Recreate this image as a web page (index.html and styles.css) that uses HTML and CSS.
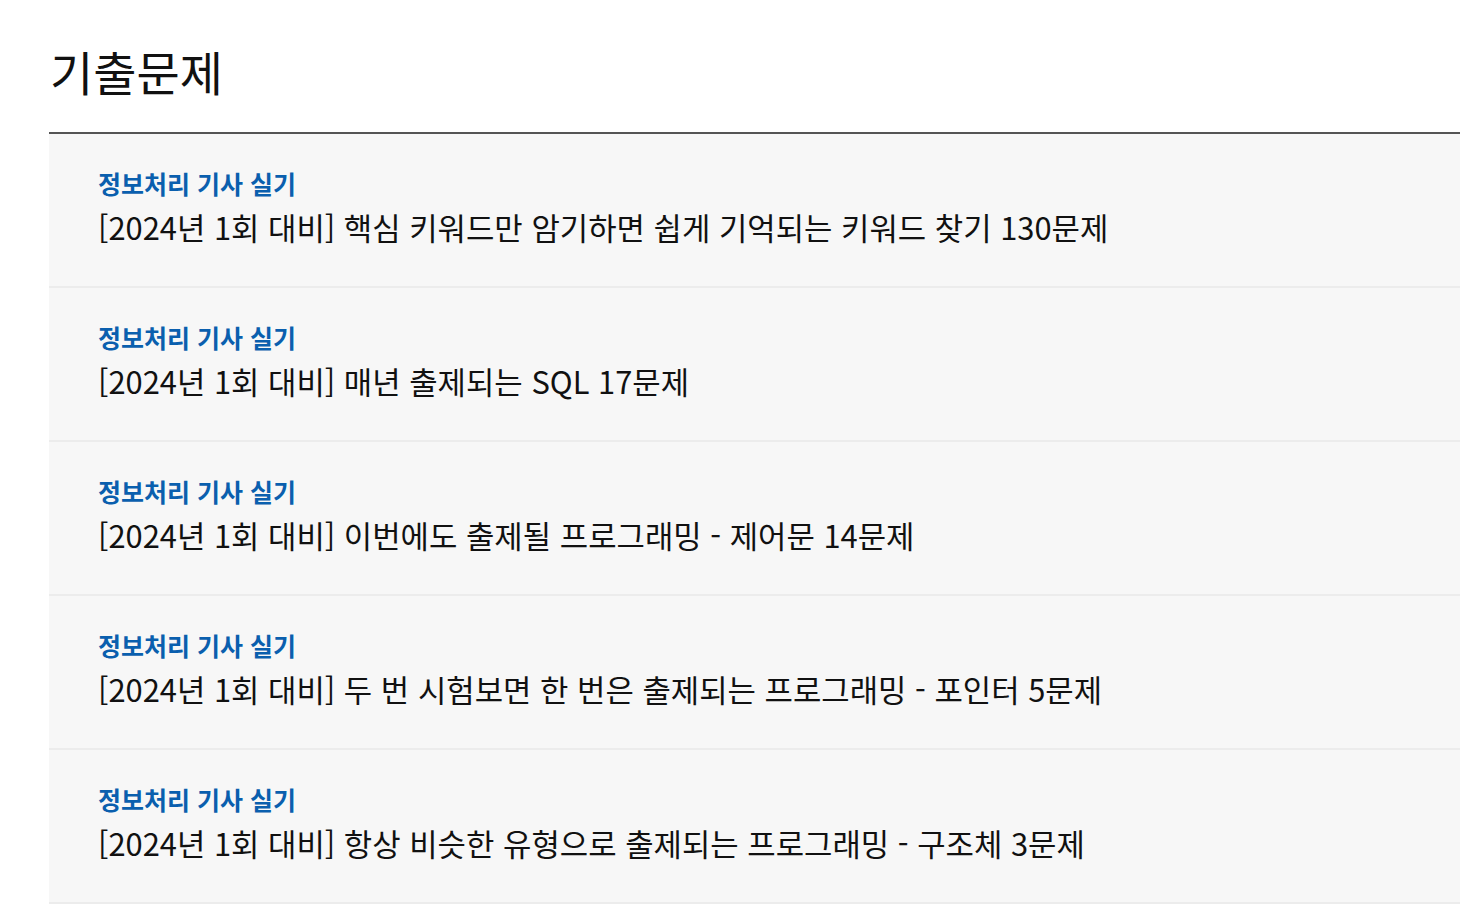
FILE: index.html
```html
<!DOCTYPE html>
<html lang="ko">
  <head>
    <meta charset="utf-8">
    <title>기출문제</title>
    <link rel="stylesheet" href="styles.css">
  </head>
  <body>
    <div class="board">
      <h1 class="board-title">기출문제</h1>

      <ul class="post-list">
        <li class="post">
          <span class="post-cat">정보처리 기사 실기</span>
          <p class="post-name">[2024년 1회 대비] 핵심 키워드만 암기하면 쉽게 기억되는 키워드 찾기 130문제</p>
        </li>
        <li class="post">
          <span class="post-cat">정보처리 기사 실기</span>
          <p class="post-name">[2024년 1회 대비] 매년 출제되는 SQL 17문제</p>
        </li>
        <li class="post">
          <span class="post-cat">정보처리 기사 실기</span>
          <p class="post-name">[2024년 1회 대비] 이번에도 출제될 프로그래밍 - 제어문 14문제</p>
        </li>
        <li class="post">
          <span class="post-cat">정보처리 기사 실기</span>
          <p class="post-name">[2024년 1회 대비] 두 번 시험보면 한 번은 출제되는 프로그래밍 - 포인터 5문제</p>
        </li>
        <li class="post">
          <span class="post-cat">정보처리 기사 실기</span>
          <p class="post-name">[2024년 1회 대비] 항상 비슷한 유형으로 출제되는 프로그래밍 - 구조체 3문제</p>
        </li>
      </ul>
    </div>
  </body>
</html>
```

FILE: styles.css
```css
body {
  margin: 0;
  font-family: "Noto Sans CJK KR", "Noto Sans", sans-serif;
  color: #111;
  background: #fff;
}
.board {
  padding-left: 49px;
}
.board-title {
  margin: 0;
  padding: 37px 0 27px 1px;
  font-size: 47px;
  font-weight: 400;
  line-height: 68px;
  border-bottom: 2px solid #555;
}
.post-list {
  list-style-type: none;
  margin: 0;
  padding: 0;
}
.post {
  display: flex;
  flex-direction: column;
  height: 123px;
  padding: 29px 0 0 49px;
  background: #f7f7f7;
  border-bottom: 2px solid #ececec;
}
.post-cat {
  font-size: 25px;
  font-weight: 700;
  color: #0a5fae;
  line-height: 41px;
}
.post-name {
  margin: 0;
  font-size: 30.85px;
  line-height: 46px;
}
```
